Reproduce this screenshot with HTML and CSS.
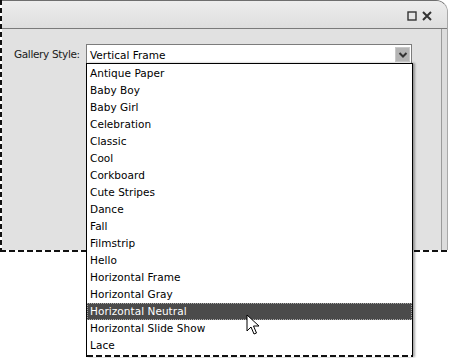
FILE: index.html
```html
<!DOCTYPE html>
<html lang="en">
<head>
  <meta charset="UTF-8" />
  <title>Gallery Style</title>
  <link rel="stylesheet" href="styles.css">
</head>
<body>
  <div class="stage">
    <div class="window">
      <div class="marquee-left"></div>
      <div class="frame">
        <div class="titlebar">
          <svg class="tb-icon" width="10" height="10" viewBox="0 0 10 10">
            <rect x="1" y="1" width="8" height="8" fill="none" stroke="#333" stroke-width="1.4"/>
          </svg>
          <svg class="tb-icon" width="10" height="10" viewBox="0 0 10 10">
            <path d="M1 1 L9 9 M9 1 L1 9" stroke="#333" stroke-width="2"/>
          </svg>
        </div>
        <div class="body">
          <div class="panel">
            <div class="field">
              <span class="label">Gallery Style:</span>
              <div class="select">
                <span class="value">Vertical Frame</span>
                <span class="arrow">
                  <svg width="10" height="8" viewBox="0 0 10 8">
                    <path d="M1.5 2 L5 5.5 L8.5 2" fill="none" stroke="#333" stroke-width="2"/>
                  </svg>
                </span>
              </div>
            </div>
          </div>
        </div>
      </div>
    </div>
    <div class="marquee-bottom"></div>

    <ul class="list">
      <li>Antique Paper</li>
      <li>Baby Boy</li>
      <li>Baby Girl</li>
      <li>Celebration</li>
      <li>Classic</li>
      <li>Cool</li>
      <li>Corkboard</li>
      <li>Cute Stripes</li>
      <li>Dance</li>
      <li>Fall</li>
      <li>Filmstrip</li>
      <li>Hello</li>
      <li>Horizontal Frame</li>
      <li>Horizontal Gray</li>
      <li class="active">Horizontal Neutral</li>
      <li>Horizontal Slide Show</li>
      <li>Lace</li>
    </ul>

    <svg class="cursor" width="14" height="22" viewBox="0 0 14 22">
      <path d="M1 1 L1 17 L5 13 L8 20 L10.5 19 L7.5 12 L13 12 Z" fill="#fff" stroke="#000" stroke-width="1" stroke-linejoin="miter"/>
    </svg>
  </div>
</body>
</html>
```

FILE: styles.css
```css
* {
  box-sizing: border-box;
}

body {
  margin: 0;
  background: #fff;
  font-family: "DejaVu Sans", Verdana, sans-serif;
  font-size: 10.5px;
  color: #111;
}

.stage {
  position: relative;
  width: 450px;
  height: 358px;
  overflow: hidden;
}

.window {
  display: flex;
  width: 448px;
  height: 250px;
}

.marquee-left {
  width: 2px;
  flex: none;
  background: repeating-linear-gradient(to bottom, #111 0 5px, transparent 5px 8px);
}

.frame {
  flex: 1;
  display: flex;
  flex-direction: column;
  border-top: 1px solid #6e6e6e;
  border-right: 1px solid #a8a8a8;
  border-top-right-radius: 12px;
  background: #dcdcdc;
}

.titlebar {
  height: 28px;
  flex: none;
  display: flex;
  justify-content: flex-end;
  align-items: center;
  gap: 5px;
  padding: 2px 15px 0 0;
  border-bottom: 1px solid #7a7a7a;
  border-top-right-radius: 11px;
  background: linear-gradient(#ededed, #dedede);
}

.body {
  flex: 1;
  display: flex;
  padding-right: 5px;
}

.panel {
  flex: 1;
  background: #e1e1e1;
  border-right: 1px solid #9a9a9a;
  padding: 15px 0 0 12px;
}

.field {
  display: flex;
  align-items: center;
}

.label {
  width: 72px;
  flex: none;
  color: #1a1a1a;
  letter-spacing: -0.35px;
  white-space: nowrap;
}

.select {
  width: 326px;
  height: 20px;
  display: flex;
  align-items: center;
  justify-content: space-between;
  padding: 0 1px 0 3px;
  background: #fff;
  border: 1px solid #7c7c7c;
  border-bottom: none;
}

.value {
  color: #000;
}

.arrow {
  width: 15px;
  height: 15px;
  display: flex;
  align-items: center;
  justify-content: center;
  background: #b4b4b4;
  border: 1px solid #c8c8c8;
}

.list {
  position: absolute;
  left: 86px;
  top: 63px;
  width: 327px;
  margin: 0;
  padding: 1px 0 0;
  list-style: none;
  background: #fff;
  border-top: 1.5px solid #000;
  border-left: 1px solid #000;
  border-right: 1px solid #000;
  box-shadow: 2px 0 2px rgba(0, 0, 0, 0.35);
}

.list li {
  height: 17px;
  line-height: 17px;
  padding-left: 3px;
  color: #000;
  letter-spacing: 0.05px;
}

.list li.active {
  background: #4b4b4b;
  color: #fff;
  outline: 1px dotted #aaa;
  outline-offset: -1px;
}

.list::after {
  content: "";
  display: block;
  height: 1.5px;
  margin-top: 1px;
  background: repeating-linear-gradient(to right, #111 0 6px, transparent 6px 9px);
}

.marquee-bottom {
  height: 1.5px;
  width: 450px;
  background: repeating-linear-gradient(to right, #111 0 6px, transparent 6px 9px);
}

.cursor {
  position: absolute;
  left: 246px;
  top: 314px;
}
```
